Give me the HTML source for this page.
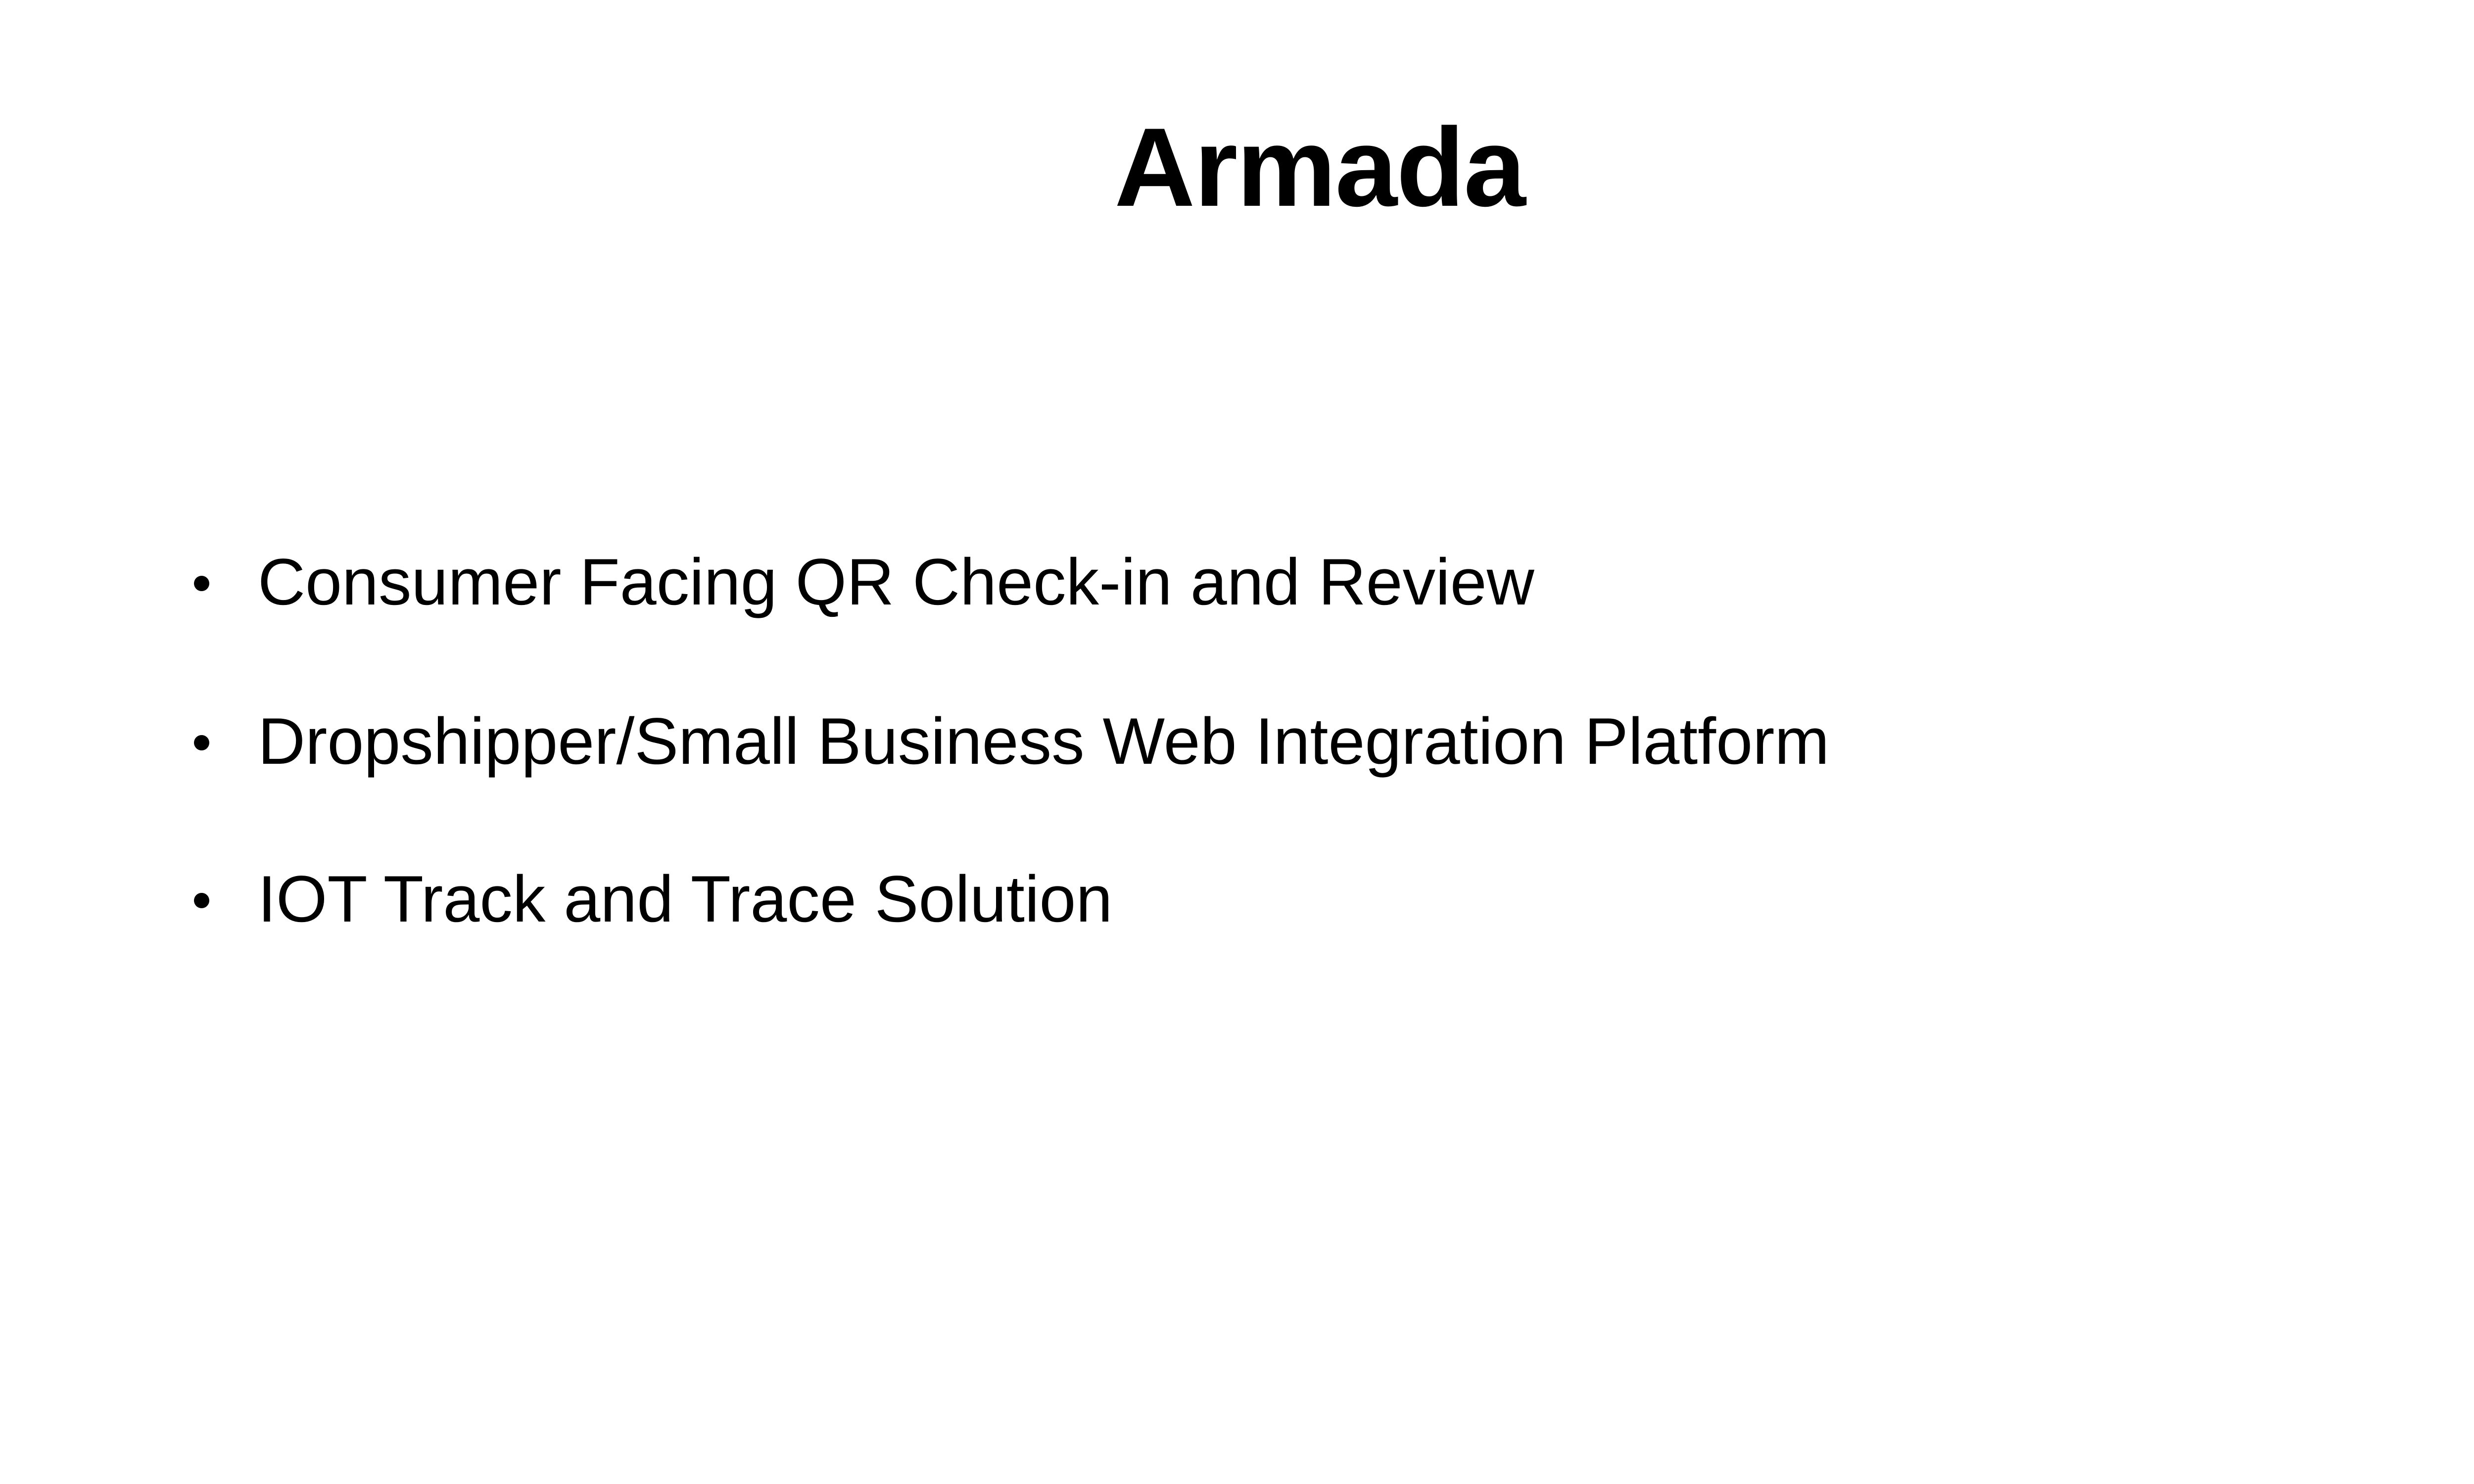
<!DOCTYPE html>
<html><head><meta charset="utf-8"><style>
html,body{margin:0;padding:0;background:#fff;}
body{width:5334px;height:3000px;position:relative;overflow:hidden;font-family:"Liberation Sans",Arial,sans-serif;color:#000;}
.t{position:absolute;left:0;width:5334px;top:225px;text-align:center;font-size:226px;font-weight:bold;line-height:1;white-space:nowrap;letter-spacing:-2px;}
.b{position:absolute;left:521px;font-size:133px;line-height:1;white-space:nowrap;}
.d{position:absolute;left:392px;width:31px;height:31px;border-radius:50%;background:#000;}
</style></head><body>
<div class="t">Armada</div>
<div class="d" style="top:1164px"></div>
<div class="b" style="top:1111px">Consumer Facing QR Check-in and Review</div>
<div class="d" style="top:1486px"></div>
<div class="b" style="top:1433px">Dropshipper/Small Business Web Integration Platform</div>
<div class="d" style="top:1805px"></div>
<div class="b" style="top:1752px">IOT Track and Trace Solution</div>
</body></html>
